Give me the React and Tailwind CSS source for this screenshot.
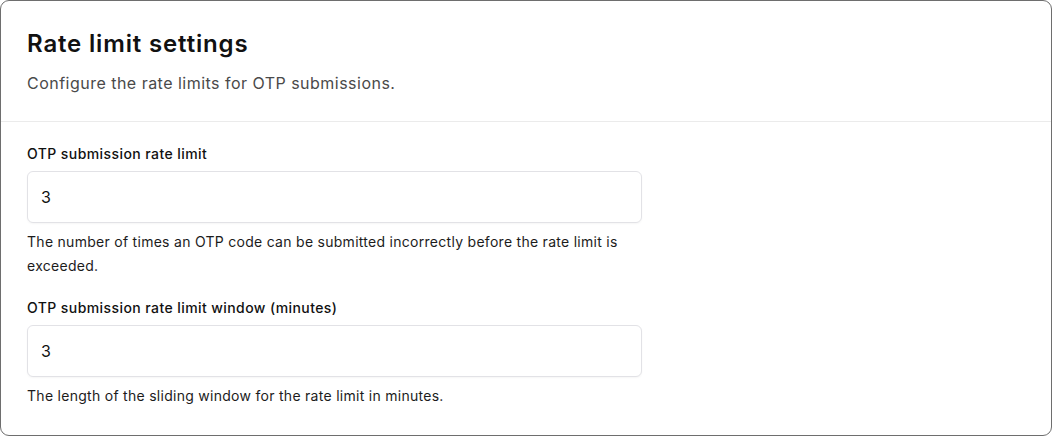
const FIELDS = [
  {
    id: 'otp-rate',
    label: 'OTP submission rate limit',
    value: '3',
    help: 'The number of times an OTP code can be submitted incorrectly before the rate limit is exceeded.',
  },
  {
    id: 'otp-window',
    label: 'OTP submission rate limit window (minutes)',
    value: '3',
    help: 'The length of the sliding window for the rate limit in minutes.',
  },
];

function Field({ field }) {
  return (
    <div className="flex flex-col w-[615px]">
      <label htmlFor={field.id} className="text-[14px] leading-5 font-medium text-[#111111] tracking-[0.03em]">
        {field.label}
      </label>
      <input
        id={field.id}
        defaultValue={field.value}
        className="mt-[7px] h-[52px] w-full rounded-md border border-[#e2e2e6] bg-white px-[13px] text-[16px] text-[#111111] shadow-[0_1px_2px_rgba(0,0,0,0.04)] outline-none"
      />
      <p className="mt-[7px] text-[14px] leading-6 text-[#1c1c1c] tracking-[0.02em]">{field.help}</p>
    </div>
  );
}

export default function App() {
  return (
    <div className="w-[1052px] h-[436px] bg-white" style={{ fontFamily: 'Inter, "Noto Sans", sans-serif' }}>
      <div className="h-[436px] rounded-[9px] border border-[#6e6e6e] overflow-hidden flex flex-col">
        <div className="px-[26px] pt-[27px] pb-[26px] border-b border-[#ebebeb]">
          <h1 className="text-[24px] leading-8 font-semibold text-[#111111] tracking-[0.035em]">Rate limit settings</h1>
          <p className="mt-[11px] text-[16px] leading-6 text-[#4a4a4a] tracking-[0.03em]">Configure the rate limits for OTP submissions.</p>
        </div>
        <div className="px-[26px] pt-[22px] flex flex-col gap-[20px]">
          {FIELDS.map((f) => (
            <Field key={f.id} field={f} />
          ))}
        </div>
      </div>
    </div>
  );
}
